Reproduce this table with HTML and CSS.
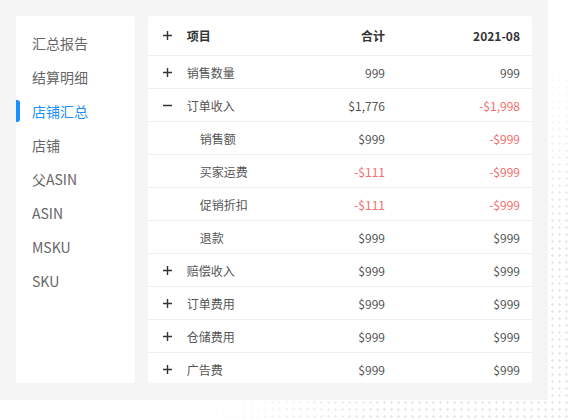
FILE: index.html
```html
<!DOCTYPE html>
<html lang="zh-CN">
<head>
<meta charset="utf-8">
<link rel="stylesheet" href="styles.css">
</head>
<body>
<div class="stage">
  <nav class="side">
    <div class="nav-item">汇总报告</div>
    <div class="nav-item">结算明细</div>
    <div class="nav-item active">店铺汇总</div>
    <div class="nav-item">店铺</div>
    <div class="nav-item">父ASIN</div>
    <div class="nav-item">ASIN</div>
    <div class="nav-item">MSKU</div>
    <div class="nav-item">SKU</div>
  </nav>
  <section class="table">
    <div class="row head">
      <span class="ic"><svg viewBox="0 0 10 10"><path d="M0 5H10M5 0V10"/></svg></span>
      <span class="label">项目</span>
      <span class="num">合计</span>
      <span class="num">2021-08</span>
    </div>
    <div class="row">
      <span class="ic"><svg viewBox="0 0 10 10"><path d="M0 5H10M5 0V10"/></svg></span>
      <span class="label">销售数量</span>
      <span class="num">999</span>
      <span class="num">999</span>
    </div>
    <div class="row">
      <span class="ic"><svg viewBox="0 0 10 10"><path d="M0 5H10"/></svg></span>
      <span class="label">订单收入</span>
      <span class="num">$1,776</span>
      <span class="num neg">-$1,998</span>
    </div>
    <div class="row sub">
      <span class="ic"></span>
      <span class="label">销售额</span>
      <span class="num">$999</span>
      <span class="num neg">-$999</span>
    </div>
    <div class="row sub">
      <span class="ic"></span>
      <span class="label">买家运费</span>
      <span class="num neg">-$111</span>
      <span class="num neg">-$999</span>
    </div>
    <div class="row sub">
      <span class="ic"></span>
      <span class="label">促销折扣</span>
      <span class="num neg">-$111</span>
      <span class="num neg">-$999</span>
    </div>
    <div class="row sub">
      <span class="ic"></span>
      <span class="label">退款</span>
      <span class="num">$999</span>
      <span class="num">$999</span>
    </div>
    <div class="row">
      <span class="ic"><svg viewBox="0 0 10 10"><path d="M0 5H10M5 0V10"/></svg></span>
      <span class="label">赔偿收入</span>
      <span class="num">$999</span>
      <span class="num">$999</span>
    </div>
    <div class="row">
      <span class="ic"><svg viewBox="0 0 10 10"><path d="M0 5H10M5 0V10"/></svg></span>
      <span class="label">订单费用</span>
      <span class="num">$999</span>
      <span class="num">$999</span>
    </div>
    <div class="row">
      <span class="ic"><svg viewBox="0 0 10 10"><path d="M0 5H10M5 0V10"/></svg></span>
      <span class="label">仓储费用</span>
      <span class="num">$999</span>
      <span class="num">$999</span>
    </div>
    <div class="row">
      <span class="ic"><svg viewBox="0 0 10 10"><path d="M0 5H10M5 0V10"/></svg></span>
      <span class="label">广告费</span>
      <span class="num">$999</span>
      <span class="num">$999</span>
    </div>
  </section>
</div>
</body>
</html>
```
FILE: styles.css
```css
html, body {
  margin: 0;
  padding: 0;
}
body {
  width: 570px;
  height: 420px;
  overflow: hidden;
  font-family: "Noto Sans CJK SC", "Noto Sans", sans-serif;
  background:
    linear-gradient(135deg, #fff 62%, rgba(255,255,255,0) 80%),
    radial-gradient(circle, #e6e6e6 1px, transparent 1.4px) right bottom / 7px 7px,
    #fff;
}
.stage {
  width: 548px;
  height: 400px;
  box-sizing: border-box;
  padding: 16px;
  background: #f5f5f5;
  display: flex;
  gap: 13px;
  align-items: flex-start;
}
.side {
  width: 119px;
  height: 367px;
  box-sizing: border-box;
  background: #fff;
  border-radius: 3px;
  padding-top: 17px;
  display: flex;
  flex-direction: column;
}
.nav-item {
  position: relative;
  height: 34px;
  line-height: 20px;
  padding-left: 16px;
  font-size: 14px;
  color: #666;
}
.nav-item.active {
  color: #1890ff;
}
.nav-item.active::before {
  content: "";
  position: absolute;
  left: 0;
  top: -1px;
  width: 4px;
  height: 22px;
  background: #1890ff;
  border-radius: 0 3px 3px 0;
}
.table {
  width: 385px;
  height: 367px;
  overflow: hidden;
  background: #fff;
  border-radius: 3px;
  font-size: 12px;
  color: #555;
}
.row {
  display: grid;
  grid-template-columns: 39px 1fr 135px 135px;
  padding-right: 12px;
  height: 33px;
  align-items: center;
  border-bottom: 1px solid #eeeeee;
  box-sizing: border-box;
}
.row.head {
  height: 40px;
  color: #333;
  font-weight: 700;
}
.ic {
  display: flex;
  justify-content: center;
  padding-left: 1px;
}
.ic svg {
  width: 9px;
  height: 9px;
  stroke: #333;
  stroke-width: 1.6;
  fill: none;
}
.sub .label {
  padding-left: 13px;
}
.num {
  text-align: right;
}
.neg {
  color: #f56c6c;
}
```
